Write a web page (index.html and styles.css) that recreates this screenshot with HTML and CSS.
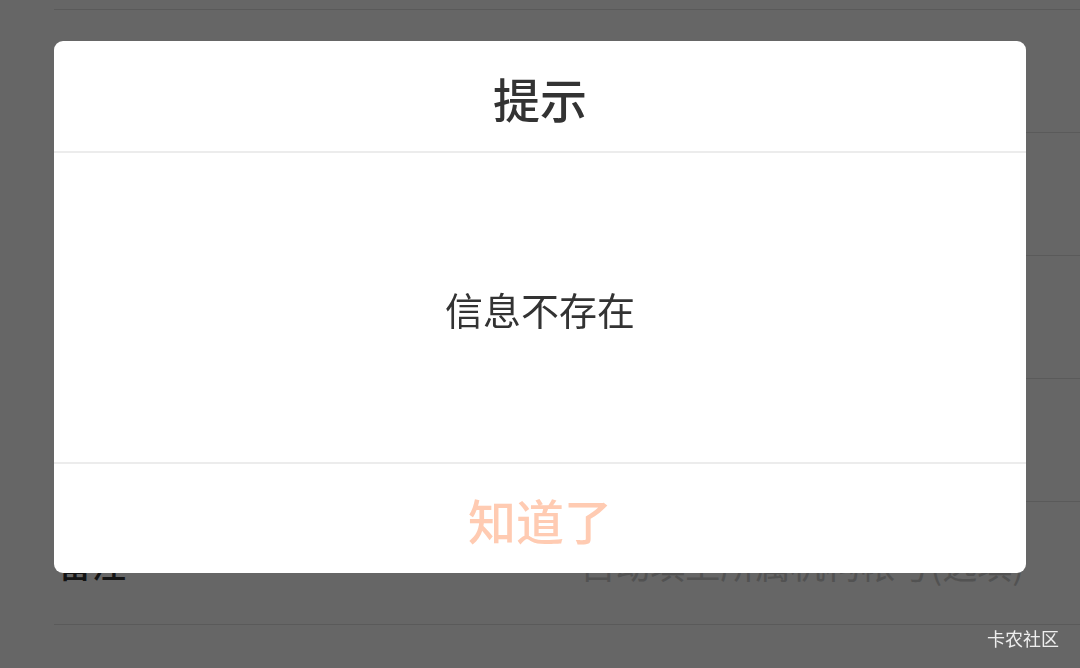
FILE: index.html
```html
<!DOCTYPE html>
<html lang="zh-CN">
<head>
<meta charset="utf-8">
<title>提示</title>
<link rel="stylesheet" href="styles.css">
</head>
<body>
<div class="page">
  <div class="list">
    <div class="row"></div>
    <div class="row"><span class="label">手机号</span><span class="value">请输入手机号</span></div>
    <div class="row"><span class="label">身份证</span><span class="value">请输入身份证号</span></div>
    <div class="row"><span class="label">地区</span><span class="value">请选择地区</span></div>
    <div class="row"><span class="label">机构</span><span class="value">请选择所属机构</span></div>
    <div class="row"><span class="label">备注</span><span class="value">自动填上所属机构帐号(选填)</span></div>
  </div>
</div>
<div class="mask">
  <div class="dialog">
    <div class="dialog-title">提示</div>
    <div class="dialog-body">信息不存在</div>
    <div class="dialog-footer">知道了</div>
  </div>
</div>
<div class="watermark">卡农社区</div>
</body>
</html>
```
FILE: styles.css
```css
html, body {
  margin: 0;
  padding: 0;
  width: 1080px;
  height: 668px;
  overflow: hidden;
  background: #ffffff;
  font-family: "Noto Sans CJK SC", "Noto Sans", sans-serif;
}
.page {
  width: 1080px;
  height: 668px;
  overflow: hidden;
}
.list {
  margin-top: -113px;
  margin-left: 54px;
}
.row {
  height: 122px;
  border-bottom: 1px solid #e1e1e1;
  display: flex;
  align-items: center;
  justify-content: space-between;
  padding-right: 56px;
}
.label {
  font-size: 34px;
  color: #333333;
  font-weight: 500;
  padding-left: 4px;
}
.value {
  font-size: 35px;
  color: #cccccc;
}
.mask {
  position: fixed;
  inset: 0;
  background: rgba(0, 0, 0, 0.6);
  display: flex;
  justify-content: center;
  align-items: flex-start;
  padding-top: 41px;
}
.dialog {
  width: 972px;
  background: #ffffff;
  border-radius: 9px;
  overflow: hidden;
  display: flex;
  flex-direction: column;
}
.dialog-title {
  height: 112px;
  border-bottom: 2px solid #ececec;
  box-sizing: border-box;
  display: flex;
  align-items: center;
  justify-content: center;
  padding-top: 3px;
  font-size: 47px;
  font-weight: 500;
  color: #333333;
}
.dialog-body {
  height: 311px;
  border-bottom: 2px solid #ececec;
  box-sizing: border-box;
  display: flex;
  align-items: center;
  justify-content: center;
  padding-top: 2px;
  font-size: 38px;
  color: #333333;
}
.dialog-footer {
  height: 109px;
  display: flex;
  align-items: center;
  justify-content: center;
  font-size: 48px;
  font-weight: 500;
  color: #ffcbb2;
}
.watermark {
  position: fixed;
  right: 21px;
  top: 625px;
  font-size: 18px;
  color: #eeeeee;
}
```
